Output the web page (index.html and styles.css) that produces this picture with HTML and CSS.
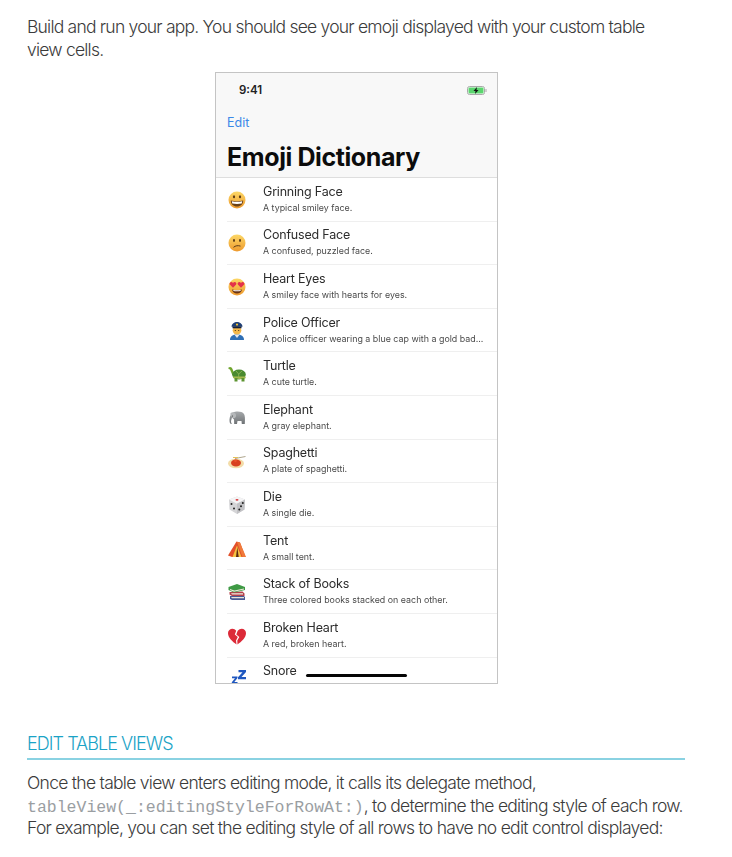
FILE: index.html
```html
<!DOCTYPE html>
<html lang="en">
<head>
    <meta charset="UTF-8">
    <meta name="viewport" content="width=device-width, initial-scale=1.0">
    <title>Edit Table Views</title>
    <link rel="stylesheet" href="styles.css">
</head>
<body>
    <svg class="defs" width="0" height="0">
        <defs>
            <linearGradient id="face" x1="0" y1="0" x2="0" y2="1">
                <stop offset="0" stop-color="#fcd766"/>
                <stop offset="1" stop-color="#ee9a2e"/>
            </linearGradient>
            <linearGradient id="grey" x1="0" y1="0" x2="0" y2="1">
                <stop offset="0" stop-color="#a6a9ab"/>
                <stop offset="1" stop-color="#6f7376"/>
            </linearGradient>
        </defs>
    </svg>

    <p class="para">Build and run your app. You should see your emoji displayed with your custom table view cells.</p>

    <figure class="phone">
        <div class="screen">
            <div class="nav">
                <div class="status">
                    <span class="time">9:41</span>
                    <svg class="battery" width="20" height="9" viewBox="0 0 20 9">
                        <rect x="0.5" y="0.5" width="17" height="8" rx="2" fill="#fff" stroke="#a9a9a9"/>
                        <rect x="1.500" y="1.500" width="15" height="6" rx="1" fill="#5bd56e"/>
                        <rect x="18.500" y="3" width="1" height="3" fill="#a9a9a9"/>
                        <path d="M10 1 6.500 5h2L8 8l3.500-4h-2z" fill="#111"/>
                    </svg>
                </div>
                <a class="edit">Edit</a>
                <h1 class="title">Emoji Dictionary</h1>
            </div>

            <ul class="rows">
                <li class="row">
                    <svg class="emoji" viewBox="0 0 20 20"><circle cx="10" cy="10" r="8.500" fill="url(#face)"/><path d="M3.800 10.500c4 1 8.400 1 12.400 0 0 3.800-2.700 6-6.200 6s-6.200-2.200-6.200-6z" fill="#6a4016"/><path d="M4.800 11.300c3.400.7 7 .7 10.400 0l-.5 2.200c-3 .6-6.400.6-9.400 0z" fill="#fff"/><ellipse cx="7" cy="6.800" rx="1.100" ry="1.500" fill="#5b3a16"/><ellipse cx="13" cy="6.800" rx="1.100" ry="1.500" fill="#5b3a16"/></svg>
                    <div class="cell"><span class="name">Grinning Face</span><span class="desc">A typical smiley face.</span></div>
                </li>
                <li class="row">
                    <svg class="emoji" viewBox="0 0 20 20"><circle cx="10" cy="10" r="8.500" fill="url(#face)"/><ellipse cx="7" cy="7.500" rx="1" ry="1.400" fill="#5b3a16"/><ellipse cx="13" cy="7.500" rx="1" ry="1.400" fill="#5b3a16"/><path d="M6.500 14.300c2-1.700 4.500-2 7-1.200" fill="none" stroke="#5b3a16" stroke-width="1"/></svg>
                    <div class="cell"><span class="name">Confused Face</span><span class="desc">A confused, puzzled face.</span></div>
                </li>
                <li class="row">
                    <svg class="emoji" viewBox="0 0 20 20"><circle cx="10" cy="10" r="8.500" fill="url(#face)"/><path d="M5 12.500c3.300.8 6.700.8 10 0-.4 2.500-2.500 4-5 4s-4.600-1.500-5-4z" fill="#6a3416"/><path d="M6.200 13c2.500.4 5 .4 7.600 0l-.3 1c-2.300.4-4.700.4-7 0z" fill="#fff"/><path d="M6 10.800 2.800 7.500C1.800 5.300 4.800 3.800 6 6c1.200-2.200 4.200-.7 3.200 1.500z" fill="#e4314a"/><path d="M14 10.800 10.800 7.500C9.800 5.300 12.800 3.800 14 6c1.200-2.200 4.200-.7 3.200 1.500z" fill="#e4314a"/></svg>
                    <div class="cell"><span class="name">Heart Eyes</span><span class="desc">A smiley face with hearts for eyes.</span></div>
                </li>
                <li class="row">
                    <svg class="emoji" viewBox="0 0 20 20"><path d="M3 19c0-4 3-5.500 7-5.500s7 1.500 7 5.500z" fill="#2f6fb5"/><path d="M7.500 13.800h5L10 17z" fill="#e8e8ea"/><circle cx="10" cy="9.200" r="4.300" fill="#f4b84a"/><path d="M4.500 5.800C4.500 2.800 7.500 1 10 1s5.500 1.800 5.500 4.800z" fill="#1f3f75"/><rect x="5.500" y="5.500" width="9" height="1.800" fill="#14203a"/><circle cx="10" cy="3.600" r="1.100" fill="#f2c230"/><circle cx="8.300" cy="9.500" r=".6" fill="#3a2410"/><circle cx="11.700" cy="9.500" r=".6" fill="#3a2410"/></svg>
                    <div class="cell"><span class="name">Police Officer</span><span class="desc">A police officer wearing a blue cap with a gold bad...</span></div>
                </li>
                <li class="row">
                    <svg class="emoji" viewBox="0 0 20 20"><path d="M1.500 3.500C3 2.300 5 3 5.500 5L7.500 10l-2 1.500-2.500-6c-1 0-2-1-1.500-2z" fill="#6fa52d"/><ellipse cx="12" cy="10.500" rx="6.800" ry="5" fill="#4a8a30"/><path d="M9 7l2.700 3 3.300-3M11.700 10v4" fill="none" stroke="#96b95a" stroke-width=".8"/><path d="M6 12.500h12l1 1.500c-3 1.200-9 1.200-13 0z" fill="#a5b84e"/><path d="M7.500 14h3v3.500h-3zM14.500 14h3v3.500h-3z" fill="#5d9430"/></svg>
                    <div class="cell"><span class="name">Turtle</span><span class="desc">A cute turtle.</span></div>
                </li>
                <li class="row">
                    <svg class="emoji" viewBox="0 0 20 20"><path d="M6 4.500c3-1.500 9-1.500 11 1.500 1 1.500 1.200 4.500.8 10h-3l-.3-3H10.500L10 16H7.200L7 11.500 5 9.500 4 13c0 1.500.5 2.500 1 3-2 .2-2.500-1.500-2.500-3.500S3 6.500 6 4.500z" fill="url(#grey)"/><path d="M3.500 5C6 3.500 8.500 4.500 9 7s-1.500 3.500-3 3-3-2.500-2.500-5z" fill="#b4b7b9"/><circle cx="5.300" cy="8" r=".5" fill="#222"/></svg>
                    <div class="cell"><span class="name">Elephant</span><span class="desc">A gray elephant.</span></div>
                </li>
                <li class="row">
                    <svg class="emoji" viewBox="0 0 20 20"><ellipse cx="9" cy="12.500" rx="8" ry="4.800" fill="#f3dca8"/><ellipse cx="9" cy="12" rx="5" ry="3.400" fill="#d8401f"/><circle cx="8.500" cy="9.800" r="1.400" fill="#e9502a"/><path d="M8 7.500 18.500 5.500" stroke="#9a8f70" stroke-width=".8"/><path d="M6 6.500h5" stroke="#e4c25a" stroke-width="1"/></svg>
                    <div class="cell"><span class="name">Spaghetti</span><span class="desc">A plate of spaghetti.</span></div>
                </li>
                <li class="row">
                    <svg class="emoji" viewBox="0 0 20 20"><path d="M10 1.500 18 4.500 17.500 14.500 10 19 2.500 14.500 2 4.500z" fill="#d5d5d7"/><path d="M10 1.500 18 4.500 10 8.800 2 4.500z" fill="#f4f4f5"/><path d="M10 8.800V19l7.500-4.500.5-10z" fill="#c2c2c5"/><ellipse cx="10" cy="4.800" rx="1.500" ry=".9" fill="#d8353a"/><circle cx="4.500" cy="9" r="1" fill="#222"/><circle cx="7" cy="13.500" r="1" fill="#222"/><circle cx="15.800" cy="8" r="1" fill="#222"/><circle cx="14" cy="11.300" r="1" fill="#222"/><circle cx="12.300" cy="14.500" r="1" fill="#222"/></svg>
                    <div class="cell"><span class="name">Die</span><span class="desc">A single die.</span></div>
                </li>
                <li class="row">
                    <svg class="emoji" viewBox="0 0 20 20"><path d="M9.500 2.500 1 16.500l4 1.500h13.500L13 3.500z" fill="#e2502a"/><path d="M10 6.500 5.500 18h9z" fill="#f5c242"/><path d="M10.300 8 9 18h2.700z" fill="#5a2a12"/><path d="M10 3 13 3.500 19 18h-3.500z" fill="#f07a3a"/></svg>
                    <div class="cell"><span class="name">Tent</span><span class="desc">A small tent.</span></div>
                </li>
                <li class="row">
                    <svg class="emoji" viewBox="0 0 20 20"><path d="M3 14l13-1 2 2v3H5l-2-1z" fill="#4a5b95"/><path d="M4 15h13v1.300H5z" fill="#e8e4da"/><path d="M2.500 10l13-.5 2 2V14H5l-2.500-1.500z" fill="#b5414a"/><path d="M4 11.300h12v1.200H5z" fill="#f0ece0"/><path d="M1.500 5 10 2l8 3v3L7 10.500 1.500 8z" fill="#3f9a45"/><path d="M3 7l4.500 1.500L17 6.500v1L7 9.800 3 8z" fill="#efe9da"/></svg>
                    <div class="cell"><span class="name">Stack of Books</span><span class="desc">Three colored books stacked on each other.</span></div>
                </li>
                <li class="row">
                    <svg class="emoji" viewBox="0 0 20 20"><path d="M9.500 18.500C5.500 15.500 1 12 1 7 1 2.500 7 1 9.200 4.800L7.800 8.500 10.800 11 9 14.500z" fill="#dc2a38"/><path d="M10.500 18.500C14.500 15.500 19 12 19 7c0-4.500-5.500-6-8.300-2.200L9.300 8.500 12.300 11 10.300 14.500z" fill="#dc2a38"/></svg>
                    <div class="cell"><span class="name">Broken Heart</span><span class="desc">A red, broken heart.</span></div>
                </li>
                <li class="row">
                    <svg class="emoji" viewBox="0 0 20 20"><path d="M11.500 1h7.500v2l-4.500 5H19v2.300h-8V8.300L15.500 3.300h-4zM5 7.500h5.500V9l-3.200 4H10.500v1.800H4.800v-1.500L8 9.300H5zM0 15h3.500v1.400H0z" fill="#2058c0"/></svg>
                    <div class="cell"><span class="name">Snore</span><span class="desc"></span></div>
                </li>
            </ul>
            <div class="home-bar"></div>
        </div>
    </figure>

    <h2 class="section">EDIT TABLE VIEWS</h2>

    <p class="para para-loose">Once the table view enters editing mode, it calls its delegate method, <code class="code">tableView(_:editingStyleForRowAt:)</code>, to determine the editing style of each row. For example, you can set the editing style of all rows to have no edit control displayed:</p>
</body>
</html>
```

FILE: styles.css
```css
html, body {
    height: 857px;
    overflow: hidden;
}
body {
    font-family: "Inter", Arial, sans-serif;
    margin: 0;
    padding: 16px 47px 0 27px;
    background-color: #fff;
    color: #3b3b3b;
}
.defs {
    display: block;
    height: 0;
}
.para {
    margin: 0;
    font-size: 17.500px;
    font-weight: 300;
    line-height: 22.500px;
    letter-spacing: -0.78px;
    max-width: 654px;
}
.para-loose {
    letter-spacing: -0.72px;
    max-width: 658px;
}
.code {
    font-family: "Liberation Mono", monospace;
    font-size: 16.500px;
    line-height: 1;
    letter-spacing: 0;
    color: #9a9ea2;
}

.phone {
    width: 283px;
    height: 612px;
    margin: 11px 0 0 188px;
    border: 1px solid #c4c4c4;
    box-sizing: border-box;
    overflow: hidden;
}
.screen {
    position: relative;
    height: 100%;
    filter: blur(0.35px);
    font-family: "Inter", Arial, sans-serif;
}
.nav {
    background-color: #f8f8f8;
    border-bottom: 1px solid #dedede;
    height: 104px;
    padding: 0 10px 0 11px;
}
.status {
    display: flex;
    justify-content: space-between;
    align-items: center;
    padding: 10px 0 0 12px;
}
.time {
    font-size: 11.500px;
    font-weight: 600;
    color: #222;
}
.edit {
    display: block;
    margin-top: 18px;
    font-size: 12.500px;
    color: #3b88e8;
}
.title {
    margin: 13px 0 0;
    font-size: 25px;
    line-height: 29px;
    font-weight: 700;
    letter-spacing: -0.4px;
    color: #0c0c0c;
}

.rows {
    list-style: none;
    margin: 0;
    padding: 0;
}
.row {
    display: flex;
    align-items: center;
    height: 43.600px;
    box-sizing: border-box;
    margin-left: 11px;
    border-bottom: 1px solid #efefef;
}
.emoji {
    width: 20px;
    height: 20px;
    margin-top: 1px;
    flex: none;
}
.cell {
    display: flex;
    flex-direction: column;
    margin-left: 16px;
    min-width: 0;
}
.name {
    font-size: 12.500px;
    line-height: 16px;
    letter-spacing: -0.2px;
    color: #2c2c2c;
}
.desc {
    font-size: 8.900px;
    line-height: 14px;
    min-height: 14px;
    margin-top: 1px;
    color: #4a4a4a;
    white-space: nowrap;
}
.home-bar {
    position: absolute;
    left: 90px;
    bottom: 6px;
    width: 101px;
    height: 3px;
    border-radius: 2px;
    background-color: #050505;
}

.section {
    margin: 49px 0 12px;
    padding-bottom: 3px;
    border-bottom: 2px solid #8ad2e2;
    font-size: 18px;
    line-height: 22px;
    font-weight: 300;
    letter-spacing: -0.95px;
    color: #1ba3c6;
}
```
